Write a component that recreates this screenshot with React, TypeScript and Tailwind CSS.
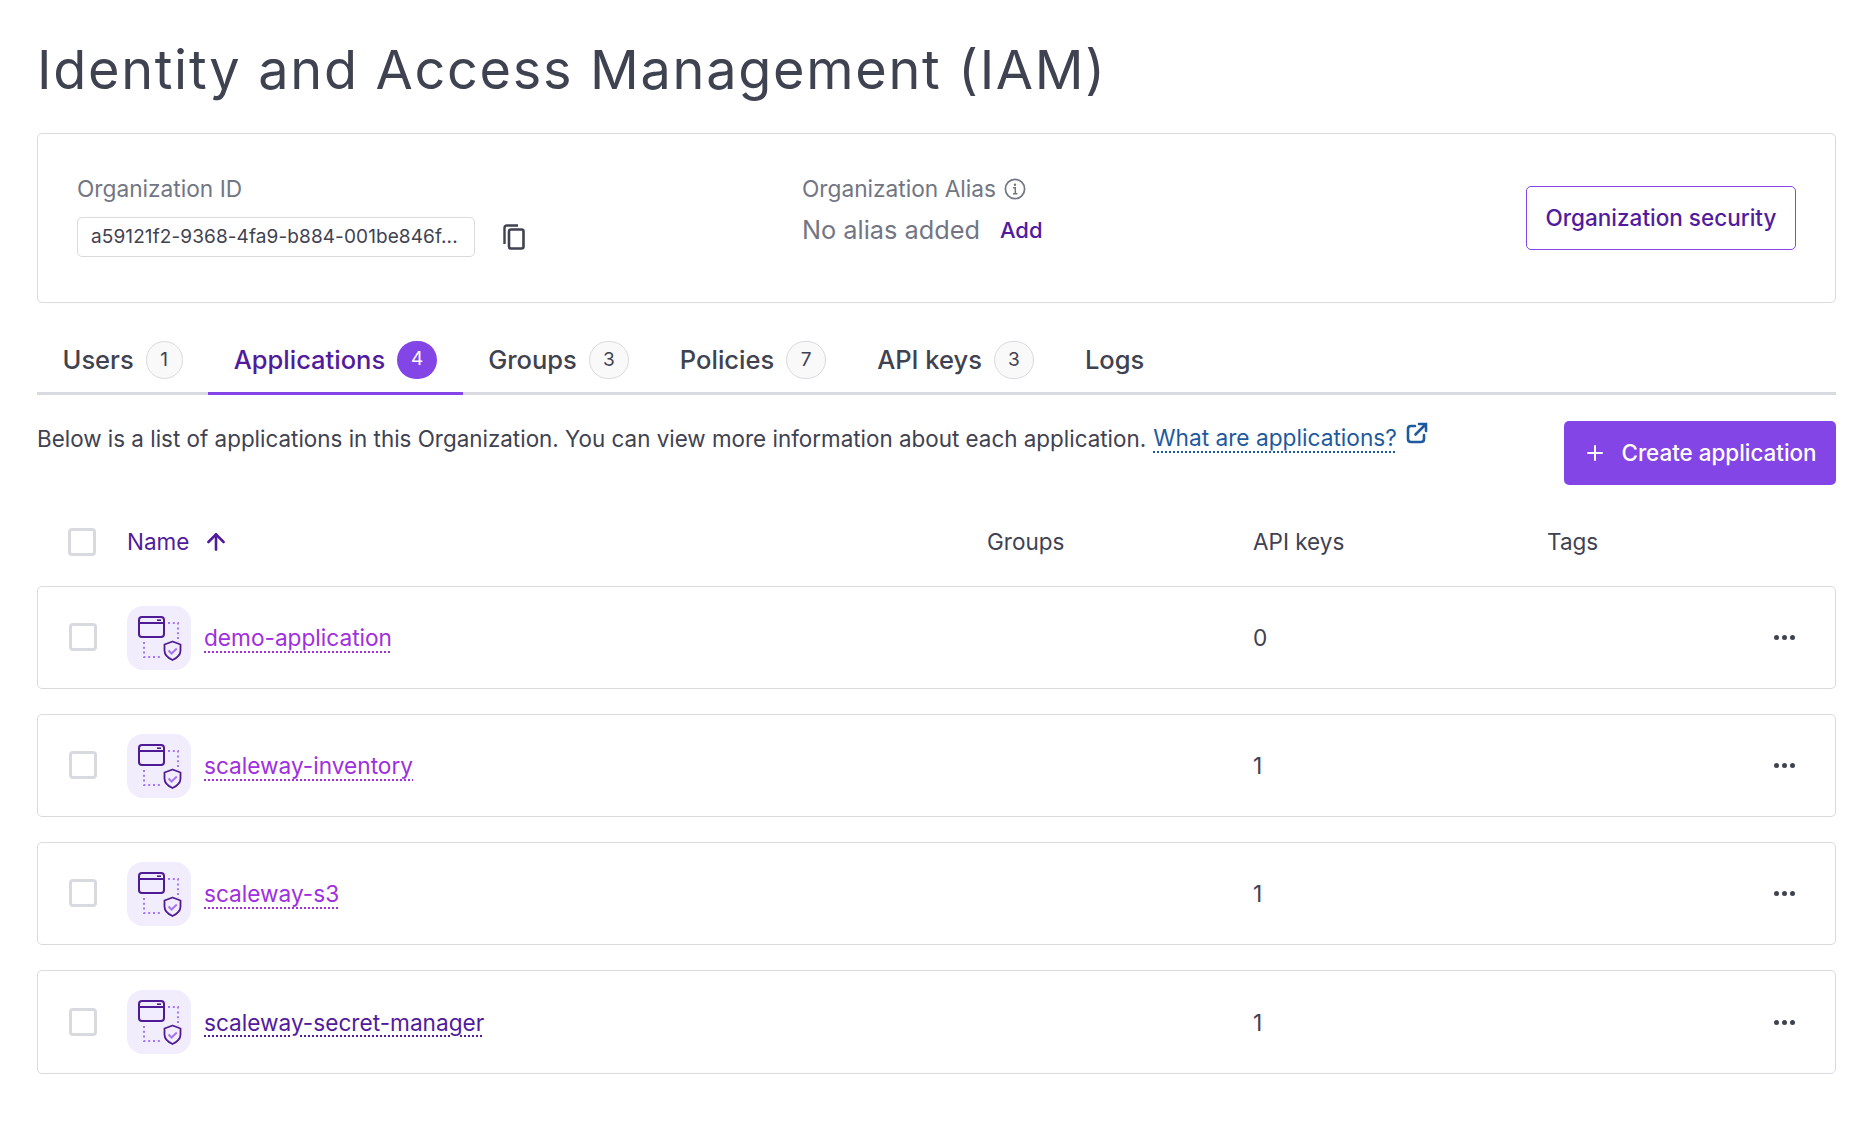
import { ArrowUp, Plus } from "lucide-react";

const tabs = [
  { label: "Users", count: "1" },
  { label: "Applications", count: "4", active: true },
  { label: "Groups", count: "3" },
  { label: "Policies", count: "7" },
  { label: "API keys", count: "3" },
  { label: "Logs" },
];

const rows = [
  { name: "demo-application", keys: "0", height: "h-[103px]", link: "text-[#a02fe0] decoration-[#a02fe0]" },
  { name: "scaleway-inventory", keys: "1", height: "h-[103px]", link: "text-[#a02fe0] decoration-[#a02fe0]" },
  { name: "scaleway-s3", keys: "1", height: "h-[103px]", link: "text-[#a02fe0] decoration-[#a02fe0]" },
  { name: "scaleway-secret-manager", keys: "1", height: "h-[104px]", link: "text-[#521b9e] decoration-[#521b9e]" },
];

function AppIcon() {
  return (
    <div className="w-16 h-16 rounded-[16px] bg-[#f1edfc] shrink-0">
      <svg width="64" height="64" viewBox="0 0 64 64" fill="none">
        {/* dotted frame */}
        <path
          d="M41 17H51V36M17 36V51H35"
          stroke="#a678f0"
          strokeWidth="2"
          strokeDasharray="2 2.8"
        />
        {/* window */}
        <rect x="12" y="11" width="25" height="20" rx="3" stroke="#4f1a96" strokeWidth="2" />
        <path d="M12 17H37" stroke="#4f1a96" strokeWidth="2" />
        <path d="M30 14.2H34" stroke="#4f1a96" strokeWidth="1.6" />
        {/* shield */}
        <path
          d="M45.5 35.5L53.5 38.5V44.5C53.5 49 50 52 45.5 54C41 52 37.5 49 37.5 44.5V38.5L45.5 35.5Z"
          fill="#f1edfc"
          stroke="#4f1a96"
          strokeWidth="1.8"
          strokeLinejoin="round"
        />
        <path d="M41.5 44.5L44.5 47.5L49.8 42.5" stroke="#a678f0" strokeWidth="2" />
      </svg>
    </div>
  );
}

function Checkbox() {
  return <div className="w-7 h-7 rounded-[4px] border-[3px] border-[#d9dadf] bg-white" />;
}

export default function App() {
  return (
    <div
      className="min-h-[1144px] bg-white pl-[37px] pr-[34px] text-[#3f4250]"
      style={{ fontFamily: "Inter, 'Liberation Sans', sans-serif" }}
    >
      <h1 className="pt-[32px] pb-[26px] text-[54px] leading-[75px] tracking-[1.7px] font-normal text-[#3f4250]">
        Identity and Access Management (IAM)
      </h1>

      {/* Organization card */}
      <div className="h-[170px] rounded-[5px] border border-[#d9dadf] pl-[39px] pr-[39px] flex items-center">
        <div className="w-[725px] shrink-0 -mt-[6px]">
          <div className="text-[22.7px] leading-[32px] text-[#727683]">Organization ID</div>
          <div className="flex items-center mt-[12px]">
            <div className="w-[398px] h-[40px] rounded-[5px] border border-[#d9dadf] pl-[13px] flex items-center text-[19px] tracking-[0.1px] text-[#3f4250]">
              a59121f2-9368-4fa9-b884-001be846f...
            </div>
            <svg className="ml-[28px]" width="22" height="26" viewBox="0 0 22 26" fill="none">
              <path d="M1.5 20V4C1.5 2.5 2.5 1.5 4 1.5H15" stroke="#3f4250" strokeWidth="2.4" />
              <rect x="6" y="5.5" width="14.5" height="19" rx="2" stroke="#3f4250" strokeWidth="2.6" />
            </svg>
          </div>
        </div>
        <div className="flex-1 -mt-[16px]">
          <div className="flex items-center gap-[8px] text-[22.7px] leading-[32px] text-[#727683]">
            Organization Alias
            <svg width="22" height="22" viewBox="0 0 22 22" fill="none">
              <circle cx="11" cy="11" r="9.6" stroke="#727683" strokeWidth="1.7" />
              <circle cx="11" cy="6.8" r="1.2" fill="#727683" />
              <path d="M9 9.7H11.3V15.6M9 15.8H13.4" stroke="#727683" strokeWidth="1.5" />
            </svg>
          </div>
          <div className="flex items-center gap-[20px] mt-[7px] text-[25.3px] leading-[36px] text-[#727683]">
            No alias added
            <span className="text-[22px] font-medium text-[#521b9e]">Add</span>
          </div>
        </div>
        <button className="w-[270px] h-[64px] rounded-[5px] border border-[#8345e6] text-[22.5px] font-medium text-[#521b9e]">
          Organization security
        </button>
      </div>

      {/* Tabs */}
      <div className="mt-[38px] h-[54px] flex border-b-[3px] border-[#d9dadf]">
        {tabs.map((tab) => (
          <div
            key={tab.label}
            className={
              tab.active
                ? "h-[54px] px-[25.5px] flex items-start gap-[12px] border-b-[3px] border-[#8345e6] text-[#521b9e]"
                : "h-[51px] px-[25.5px] flex items-start gap-[12px] text-[#3f4250]"
            }
          >
            <span className="text-[25.5px] leading-[38px] font-medium">{tab.label}</span>
            {tab.count &&
              (tab.active ? (
                <span className="w-[40px] h-[38px] rounded-full bg-[#8345e6] text-white text-[19px] leading-[36px] text-center">
                  {tab.count}
                </span>
              ) : (
                <span
                  className={
                    tab.count === "1"
                      ? "w-[37px] h-[38px] rounded-full border border-[#d9dadf] bg-[#f9f9fa] text-[19px] leading-[35px] text-center"
                      : "w-[40px] h-[38px] rounded-full border border-[#d9dadf] bg-[#f9f9fa] text-[19px] leading-[35px] text-center"
                  }
                >
                  {tab.count}
                </span>
              ))}
          </div>
        ))}
      </div>

      {/* Description + action */}
      <div className="mt-[26px] flex justify-between items-start">
        <p className="text-[22.42px] leading-[36px] flex items-start">
          Below is a list of applications in this Organization. You can view more information about each application.
          <span className="ml-[7px] -mt-[1px] text-[22.7px] text-[#1f5a9e] underline decoration-dotted decoration-2 underline-offset-[5px]">
            What are applications?
          </span>
          <svg className="ml-[9px] mt-[1px]" width="22" height="22" viewBox="0 0 22 22" fill="none">
            <path
              d="M9 4H5C3.3 4 2 5.3 2 7V17C2 18.7 3.3 20 5 20H15C16.7 20 18 18.7 18 17V13"
              stroke="#1f5a9e"
              strokeWidth="2.6"
              strokeLinecap="round"
            />
            <path d="M9.5 12.5L19.5 2.5M13 2H20V9" stroke="#1f5a9e" strokeWidth="2.6" strokeLinecap="round" />
          </svg>
        </p>
        <button className="w-[272px] h-[64px] rounded-[5px] bg-[#8345e6] text-white text-[22.4px] font-medium flex items-center justify-center gap-[14px]">
          <Plus className="w-[24px] h-[24px]" strokeWidth={2} />
          Create application
        </button>
      </div>

      {/* Table head */}
      <div className="mt-[27px] h-[60px] grid grid-cols-[90px_860px_266px_294px_1fr] items-center text-[22.5px] text-[#3f4250]">
        <div className="pl-[31px]">
          <Checkbox />
        </div>
        <div className="flex items-center gap-[14px] text-[#521b9e]">
          Name
          <ArrowUp className="w-[26px] h-[26px]" strokeWidth={2.4} />
        </div>
        <div>Groups</div>
        <div>API keys</div>
        <div>Tags</div>
      </div>

      {/* Rows */}
      <div className="mt-[14px] flex flex-col gap-[25px]">
        {rows.map((row) => (
          <div
            key={row.name}
            className={`${row.height} rounded-[5px] border border-[#d9dadf] grid grid-cols-[89px_860px_266px_1fr] items-center text-[22.65px]`}
          >
            <div className="pl-[31px] -mt-[1px]">
              <Checkbox />
            </div>
            <div className="flex items-center gap-[13px]">
              <AppIcon />
              <span className={`mt-[1px] underline decoration-dotted decoration-2 underline-offset-[5px] ${row.link}`}>
                {row.name}
              </span>
            </div>
            <div />
            <div className="flex items-center justify-between pr-[40px] mt-[1px]">
              <span>{row.keys}</span>
              <span className="flex gap-[3px]">
                <span className="w-[5px] h-[5px] rounded-full bg-[#3f4250]" />
                <span className="w-[5px] h-[5px] rounded-full bg-[#3f4250]" />
                <span className="w-[5px] h-[5px] rounded-full bg-[#3f4250]" />
              </span>
            </div>
          </div>
        ))}
      </div>
    </div>
  );
}
